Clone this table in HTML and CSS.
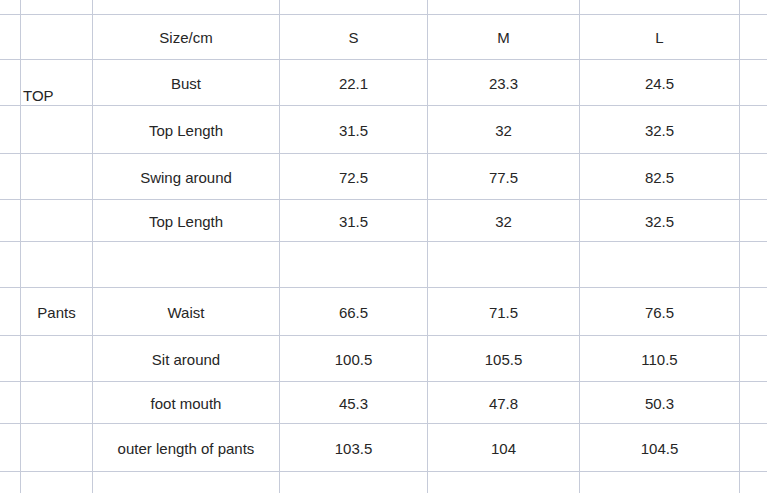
FILE: index.html
```html
<!DOCTYPE html>
<html>
<head>
<meta charset="utf-8">
<link rel="stylesheet" href="styles.css">
</head>
<body>
<div class="sheet">
  <div></div><div></div><div></div><div></div><div></div><div></div><div></div>

  <div></div><div></div><div class="c">Size/cm</div><div class="c">S</div><div class="c">M</div><div class="c">L</div><div></div>

  <div></div><div class="lb">TOP</div><div class="c">Bust</div><div class="c">22.1</div><div class="c">23.3</div><div class="c">24.5</div><div></div>

  <div></div><div></div><div class="c">Top Length</div><div class="c">31.5</div><div class="c">32</div><div class="c">32.5</div><div></div>

  <div></div><div></div><div class="c">Swing around</div><div class="c">72.5</div><div class="c">77.5</div><div class="c">82.5</div><div></div>

  <div></div><div></div><div class="c">Top Length</div><div class="c">31.5</div><div class="c">32</div><div class="c">32.5</div><div></div>

  <div></div><div></div><div></div><div></div><div></div><div></div><div></div>

  <div></div><div class="c">Pants</div><div class="c">Waist</div><div class="c">66.5</div><div class="c">71.5</div><div class="c">76.5</div><div></div>

  <div></div><div></div><div class="c">Sit around</div><div class="c">100.5</div><div class="c">105.5</div><div class="c">110.5</div><div></div>

  <div></div><div></div><div class="c">foot mouth</div><div class="c">45.3</div><div class="c">47.8</div><div class="c">50.3</div><div></div>

  <div></div><div></div><div class="c">outer length of pants</div><div class="c">103.5</div><div class="c">104</div><div class="c">104.5</div><div></div>

  <div></div><div></div><div></div><div></div><div></div><div></div><div></div>
</div>
</body>
</html>
```

FILE: styles.css
```css
html, body {
  margin: 0;
  padding: 0;
  background: #ffffff;
}

body {
  width: 767px;
  height: 493px;
  overflow: hidden;
}

.sheet {
  display: grid;
  grid-template-columns: 20px 71px 186px 147px 151px 159px 27px;
  grid-template-rows: 14px 44px 45px 47px 45px 41px 45px 47px 45px 41px 47px 22px;
  gap: 1px;
  background: #c6cbd9;
  width: 767px;
  height: 493px;
  overflow: hidden;
  font-family: "Liberation Sans", Arial, sans-serif;
  font-size: 15px;
  color: #262626;
}

.sheet > div {
  background: #ffffff;
  white-space: nowrap;
  overflow: visible;
}

.c {
  display: flex;
  align-items: center;
  justify-content: center;
  padding-top: 1px;
}

.lb {
  display: flex;
  align-items: flex-end;
  padding-left: 2px;
  padding-bottom: 1px;
}
```
